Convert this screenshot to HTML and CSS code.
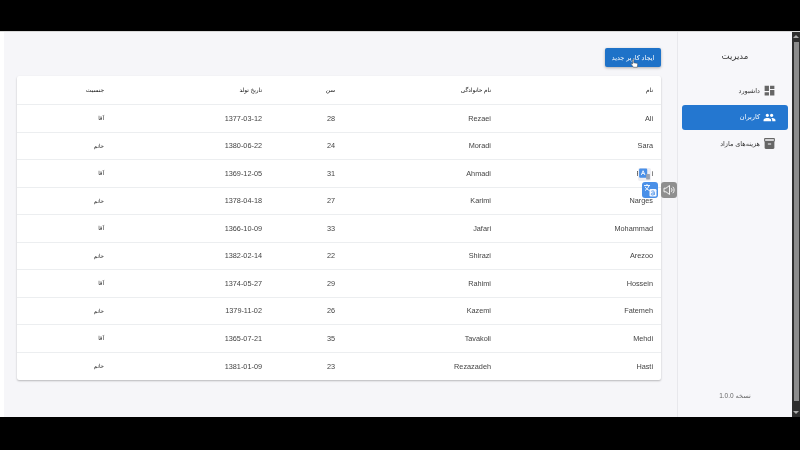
FILE: index.html
```html
<!DOCTYPE html>
<html lang="fa">
<head>
<meta charset="utf-8">
<title>مدیریت کاربران</title>
<link rel="stylesheet" href="styles.css">
</head>
<body>
<div class="frame">
  <div class="app">
    <main class="content" dir="rtl">
      <div class="toolbar">
        <button class="primary">ایجاد کاربر جدید</button>
      </div>
      <section class="table">
        <div class="row head"><span>نام</span><span>نام خانوادگی</span><span>سن</span><span>تاریخ تولد</span><span>جنسیت</span></div>
        <div class="row"><span>Ali</span><span>Rezaei</span><span>28</span><span>1377-03-12</span><span class="fa">آقا</span></div>
        <div class="row"><span>Sara</span><span>Moradi</span><span>24</span><span>1380-06-22</span><span class="fa">خانم</span></div>
        <div class="row"><span>Farhi</span><span>Ahmadi</span><span>31</span><span>1369-12-05</span><span class="fa">آقا</span></div>
        <div class="row"><span>Narges</span><span>Karimi</span><span>27</span><span>1378-04-18</span><span class="fa">خانم</span></div>
        <div class="row"><span>Mohammad</span><span>Jafari</span><span>33</span><span>1366-10-09</span><span class="fa">آقا</span></div>
        <div class="row"><span>Arezoo</span><span>Shirazi</span><span>22</span><span>1382-02-14</span><span class="fa">خانم</span></div>
        <div class="row"><span>Hossein</span><span>Rahimi</span><span>29</span><span>1374-05-27</span><span class="fa">آقا</span></div>
        <div class="row"><span>Fatemeh</span><span>Kazemi</span><span>26</span><span>1379-11-02</span><span class="fa">خانم</span></div>
        <div class="row"><span>Mehdi</span><span>Tavakoli</span><span>35</span><span>1365-07-21</span><span class="fa">آقا</span></div>
        <div class="row last"><span>Hasti</span><span>Rezazadeh</span><span>23</span><span>1381-01-09</span><span class="fa">خانم</span></div>
      </section>
    </main>
    <aside class="sidebar" dir="rtl">
      <h1 class="brand">مدیریت</h1>
      <nav class="nav">
        <a class="nav-item">
          <svg class="nav-icon" viewBox="0 0 24 24"><path d="M3 13h8V3H3v10zm0 8h8v-6H3v6zm10 0h8V11h-8v10zm0-18v6h8V3h-8z"/></svg>
          <span>داشبورد</span>
        </a>
        <a class="nav-item active">
          <svg class="nav-icon" viewBox="0 0 24 24"><path d="M16 11c1.660 0 2.990-1.340 2.990-3S17.660 5 16 5c-1.660 0-3 1.340-3 3s1.340 3 3 3zm-8 0c1.660 0 2.990-1.340 2.990-3S9.660 5 8 5C6.340 5 5 6.340 5 8s1.340 3 3 3zm0 2c-2.330 0-7 1.170-7 3.500V19h14v-2.500c0-2.330-4.670-3.500-7-3.500zm8 0c-.29 0-.62.02-.97.05 1.160.84 1.970 1.970 1.970 3.450V19h6v-2.500c0-2.330-4.670-3.500-7-3.500z"/></svg>
          <span>کاربران</span>
        </a>
        <a class="nav-item">
          <svg class="nav-icon" viewBox="0 0 24 24"><path d="M20 2H4c-1 0-2 .9-2 2v3.010c0 .72.43 1.340 1 1.690V20c0 1.100 1.100 2 2 2h14c.9 0 2-.9 2-2V8.700c.57-.35 1-.97 1-1.690V4c0-1.100-1-2-2-2zm-5 12H9v-2h6v2zm5-7H4V4l16-.02V7z"/></svg>
          <span>هزینه‌های مازاد</span>
        </a>
      </nav>
      <div class="version">نسخه 1.0.0</div>
    </aside>
    <div class="scrollbar">
      <span class="arrow up"></span>
      <span class="thumb"></span>
      <span class="arrow down"></span>
    </div>
    <!-- overlays: browser-extension translate widgets and the pointer -->
    <div class="tr-small"><svg viewBox="0 0 12 12"><rect x="1" y="0.500" width="7.500" height="8.500" rx="1" fill="#4a90e8"/><path d="M3 6.500l1.700-4 1.700 4M3.700 5h2" fill="none" stroke="#fff" stroke-width=".8"/><rect x="7.500" y="5.500" width="3.500" height="5" rx=".5" fill="#9aa3b2"/></svg></div>
    <div class="tr-large"><svg viewBox="0 0 16 16"><path d="M2 3.500h6M5 2v1.500M3 8.500c2-1 3.500-3 4-5M3.200 4.800c.8 1.800 2.500 3 4.300 3.700" fill="none" stroke="#fff" stroke-width=".9"/><rect x="7.500" y="7" width="7" height="7.500" rx="1.200" fill="#fff" opacity=".95"/><path d="M9.300 9.300c1.700-.8 3-.3 3 1v2.700M12.300 11c-2-.2-3 .3-3 1.200 0 1.100 2 1.100 3 -.1" fill="none" stroke="#4a90e8" stroke-width=".9"/></svg></div>
    <div class="tr-speak"><svg viewBox="0 0 16 16"><path d="M3 6.200h2L8.500 3.500v9L5 9.800H3z" fill="none" stroke="#fff" stroke-width=".9"/><path d="M10.300 6.200a2.600 2.600 0 0 1 0 3.600M11.800 4.800a4.500 4.500 0 0 1 0 6.400" fill="none" stroke="#fff" stroke-width=".9"/></svg></div>
    <svg class="pointer" viewBox="0 0 12 14"><path d="M3.500 1.500c.7-.6 1.500-.1 1.500.7V6l4 .8c1 .2 1.300.8 1.200 1.700L9.700 12H4.600L1.800 8.200c-.5-.8.4-1.500 1.200-.9l.6.500z" fill="#fff" stroke="#333" stroke-width=".6"/></svg>
  </div>
</div>
</body>
</html>
```
FILE: styles.css
```css
* { box-sizing: border-box; }
html, body { margin: 0; padding: 0; height: 100%; background: #000; overflow: hidden; }
body { font-family: "Liberation Sans", Roboto, "DejaVu Sans", sans-serif; color: #444; }
.frame { padding-top: 31px; height: 450px; }
.app {
  position: relative;
  display: flex;
  height: 386px;
  background: #f6f6f9;
  border-top: 1px solid #d8d8d8;
  filter: blur(0.3px);
}
.content { flex: 1; min-width: 0; padding: 16px 16px 0 13px; background: #f6f6f9; border-left: 4px solid #fff; }
.toolbar { display: flex; height: 19px; margin-bottom: 9px; }
.primary { width: 56px; height: 19px; border: 0; border-radius: 2px; background: #1e72c8; color: #fff; font: 500 6.500px "Liberation Sans", "DejaVu Sans", sans-serif; padding: 0; box-shadow: 0 1px 3px rgba(0,0,0,.3); }
.table { background: #fff; box-shadow: 0 1px 2px rgba(0,0,0,.25); border-radius: 2px; }
.row {
  display: grid;
  grid-template-columns: 162px 156px 73px 158px 95px;
  height: 27.500px;
  align-items: center;
  border-bottom: 1px solid #eceef0;
  font-size: 7.300px;
}
.row span { padding: 0 8px; }
.row.head { height: 29px; font-size: 5.800px; color: #111; }
.row.last { border-bottom: 0; }
.row .fa { font-size: 5.500px; color: #222; }
.sidebar {
  width: 115px;
  flex: none;
  background: #f7f7fa;
  border-left: 1px solid #e8e8ec;
  padding: 17px 4px 0;
  display: flex;
  flex-direction: column;
}
.brand { margin: 0; font-size: 8.500px; font-weight: 400; text-align: center; color: #333; line-height: 14px; }
.nav { display: flex; flex-direction: column; margin-top: 15px; }
.nav-item { display: flex; align-items: center; gap: 3px; height: 25px; padding: 0 12px 0 0; font-size: 6.500px; color: #333; border-radius: 3px; margin-bottom: 1.500px; }
.nav-icon { width: 13px; height: 13px; fill: #666; flex: none; }
.nav-item.active { background: #2477d0; color: #fff; }
.nav-item.active .nav-icon { fill: #fff; }
.version { margin-top: auto; margin-bottom: 16px; text-align: center; font-size: 6.500px; color: #666; line-height: 10px; }
.scrollbar {
  width: 8px;
  background: #2e2e2e;
  display: flex;
  flex-direction: column;
  align-items: center;
  justify-content: space-between;
  padding: 3px 0;
  flex: none;
}
.thumb { flex: 1; width: 5px; background: #8c8c8c; margin: 4px 0 10px; }
.arrow { width: 0; height: 0; border-left: 3px solid transparent; border-right: 3px solid transparent; }
.arrow.up { border-bottom: 3px solid #aaa; }
.arrow.down { border-top: 3px solid #aaa; }
.tr-small, .tr-large, .tr-speak { position: absolute; }
.tr-small { left: 638px; top: 136px; width: 13px; height: 13px; background: #eeeef3; border-radius: 2px; }
.tr-large { left: 642px; top: 150px; width: 16px; height: 16px; background: #4a90e8; border-radius: 3px; }
.tr-speak { left: 661px; top: 150px; width: 16px; height: 16px; background: #8f8f8f; border-radius: 3px; }
.tr-small svg, .tr-large svg, .tr-speak svg { display: block; width: 100%; height: 100%; }
.pointer { position: absolute; left: 630px; top: 26px; width: 9px; height: 11px; }
```
